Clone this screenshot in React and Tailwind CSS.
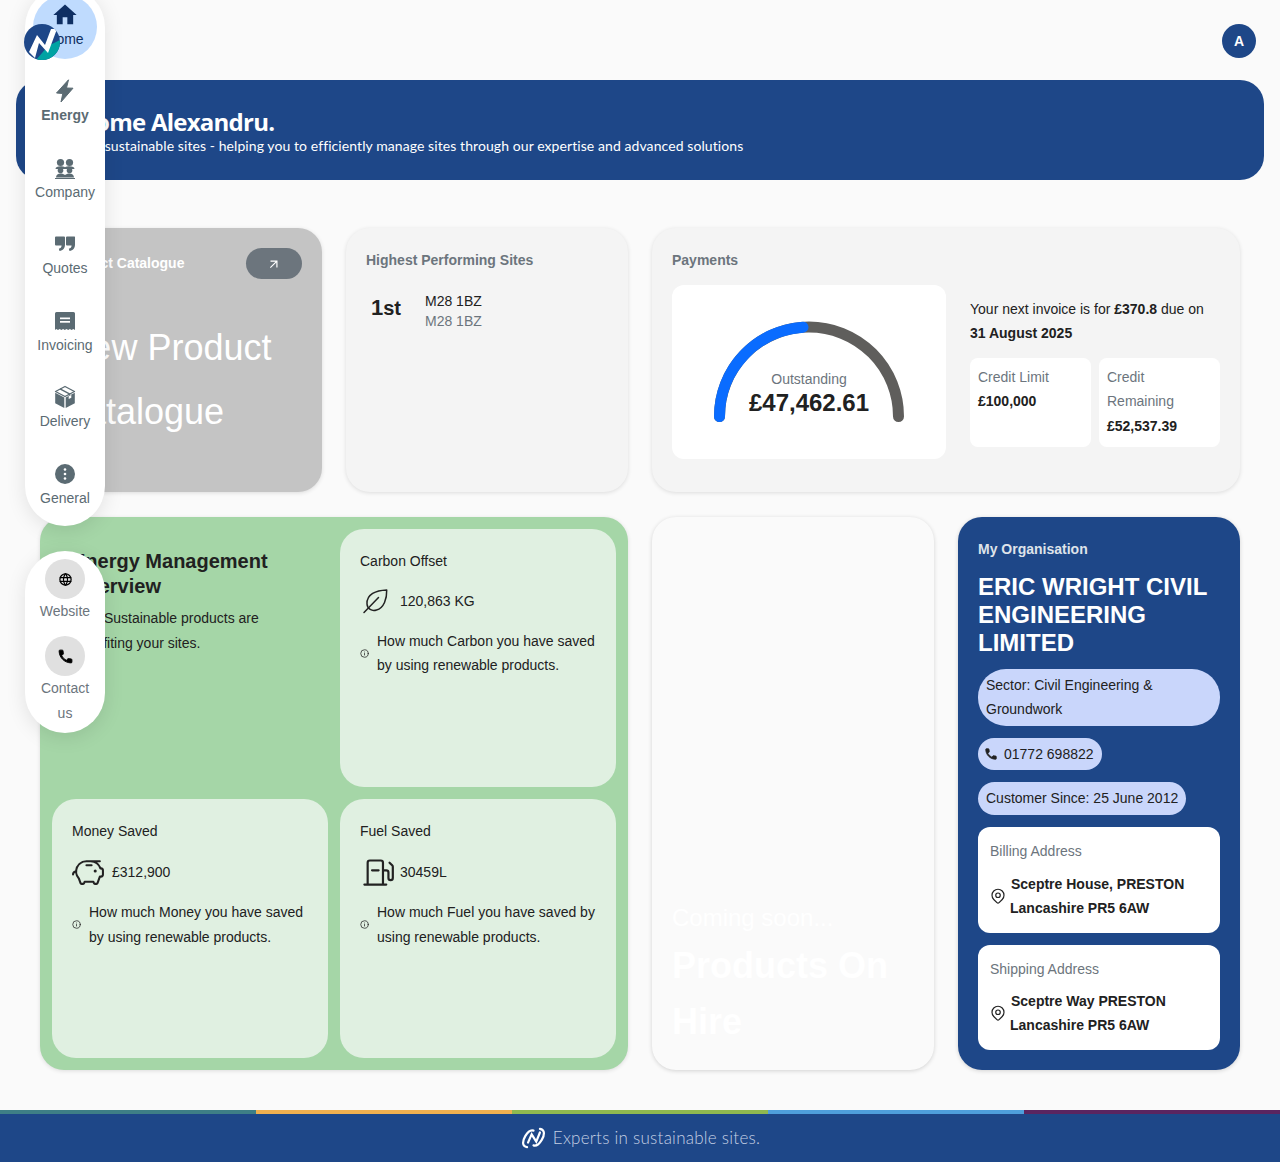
import React from "react";
import { MdHome, MdArrowOutward } from "react-icons/md";
import { TbMapPin, TbWorld } from "react-icons/tb";
import { PiPiggyBank, PiGasPump } from "react-icons/pi";
import { LuInfo } from "react-icons/lu";

const F = "font-['Liberation_Sans',Arial,sans-serif]";

function Logo() {
  return (
    <svg viewBox="0 0 36 36" className="w-9 h-9 block">
      <defs>
        <clipPath id="lc"><circle cx="18" cy="18" r="18" /></clipPath>
      </defs>
      <g clipPath="url(#lc)">
        <rect width="36" height="36" fill="#1e4788" />
        <path d="M0 36 L36 36 L36 16 L24 22 L12 36Z" fill="#00a3a3" />
        <path d="M5 28 L13 11 L21 21 L27 5 L33 5 L24 29 L15 19 L11 34Z" fill="#fff" />
      </g>
    </svg>
  );
}

function PhoneIcon({ size, color }) {
  return (
    <svg width={size} height={size} viewBox="0 0 24 24" fill={color} stroke={color} strokeWidth="1.400" strokeLinejoin="round">
      <path d="M6.620 10.790c1.440 2.830 3.760 5.140 6.590 6.590l2.200-2.200c.27-.27.67-.36 1.020-.24 1.120.37 2.330.57 3.570.57.55 0 1 .45 1 1V20c0 .55-.45 1-1 1-9.390 0-17-7.610-17-17 0-.55.45-1 1-1h3.500c.55 0 1 .45 1 1 0 1.250.2 2.450.57 3.570.11.35.03.74-.25 1.020l-2.200 2.200z" />
    </svg>
  );
}
function BoltIcon() {
  return (
    <svg viewBox="0 0 24 24" className="w-6 h-6" fill="#5b6b73" stroke="#5b6b73" strokeWidth="1" strokeLinejoin="round">
      <path d="M15.500 .8 3.500 14 9.800 14.500 8 23 20 9.200 13.500 9z" />
    </svg>
  );
}
function QuoteIcon() {
  return (
    <svg viewBox="0 0 24 24" className="w-6 h-6" fill="#5b6b73">
      <path d="M3 4.500h8a1 1 0 0 1 1 1v7c0 3.500-2 6-5.500 6.500l-.7-2.200c1.700-.5 2.700-1.500 2.800-3.300H3a1 1 0 0 1-1-1v-7a1 1 0 0 1 1-1z" />
      <path d="M14 4.500h7.500a.5.500 0 0 1 .5.500v7.500c0 3.500-2 6-5.500 6.500l-.7-2.200c1.700-.5 2.700-1.500 2.800-3.300H14a1 1 0 0 1-1-1V5.500a1 1 0 0 1 1-1z" />
    </svg>
  );
}
function CompanyIcon() {
  return (
    <svg viewBox="0 0 24 24" className="w-6 h-6" fill="#5b6b73">
      <circle cx="7.500" cy="6.500" r="3.600" />
      <circle cx="16.500" cy="6.500" r="3.600" />
      <path d="M2.500 13c0-2 2-2.800 5-2.800 1.700 0 3.400.4 4.500 1 1.100-.6 2.800-1 4.500-1 3 0 5 .8 5 2.800z" />
      <circle cx="7.500" cy="14.500" r="2.800" />
      <circle cx="16.500" cy="14.500" r="2.800" />
      <path d="M3 21.500c0-2.800 2.200-4 4.500-4 1.800 0 3.400.6 4.500 1.600 1.100-1 2.700-1.600 4.500-1.600 2.300 0 4.500 1.200 4.500 4z" />
      <rect x="2" y="22" width="20" height="1" />
    </svg>
  );
}
function InvoiceIcon() {
  return (
    <svg viewBox="0 0 24 24" className="w-6 h-6 translate-y-[1px]">
      <path d="M2 3.500a1.500 1.500 0 0 1 1.500-1.500h17a1.500 1.500 0 0 1 1.500 1.500V20l-1.700-1-1.700 1-1.700-1-1.700 1-1.700-1-1.700 1-1.700-1-1.700 1-1.700-1-1.700 1-1.700-1L2 20z" fill="#5b6b73" />
      <rect x="7" y="7.500" width="10" height="1.700" fill="#fff" />
      <rect x="7" y="11" width="10" height="1.700" fill="#fff" />
    </svg>
  );
}
function BoxIcon() {
  return (
    <svg viewBox="0 0 24 24" className="w-6 h-6" fill="#5b6b73">
      <path d="M12 1.500 21.500 6.500 12 11.500 2.500 6.500z" fill="none" stroke="#5b6b73" strokeWidth="1.300" strokeLinejoin="round" />
      <path d="M7 3.800 16.500 8.900 16.500 12" fill="none" stroke="#5b6b73" strokeWidth="1.500" />
      <path d="M2.200 7.800 11.300 12.600V23L2.200 18.200z" />
      <path d="M21.800 7.800 12.700 12.600V23L21.800 18.200z" />
      <path d="M15.700 11v3l1.600-.8 1-.5V9.900z" fill="#fff" />
    </svg>
  );
}
function DotsIcon() {
  return (
    <svg viewBox="0 0 24 24" className="w-6 h-6">
      <circle cx="12" cy="12" r="10" fill="#5b6b73" />
      <circle cx="12" cy="7.500" r="1.300" fill="#fff" />
      <circle cx="12" cy="12" r="1.300" fill="#fff" />
      <circle cx="12" cy="16.500" r="1.300" fill="#fff" />
    </svg>
  );
}
function LeafIcon() {
  return (
    <svg viewBox="0 0 27 27" className="w-[27px] h-[27px]" fill="none" stroke="#222" strokeWidth="1.500" strokeLinecap="round" strokeLinejoin="round">
      <path d="M24.700 2C14 2.500 4.500 6 5 16c.3 5 5 7.500 9.500 6C22 20 25 10.500 24.700 2z" />
      <path d="M2 24.500 16.500 9.500" />
    </svg>
  );
}

function NavItem({ icon, label, bold, active }) {
  return (
    <div className={"h-16 w-16 rounded-full flex flex-col items-center py-2 text-sm leading-6 " + (active ? "bg-[#bfdbfe] text-[#0f2f63]" : "text-[#5b6b73]") + (bold ? " font-bold" : "")}>
      <div className="h-6 flex items-center justify-center">{icon}</div>
      <div>{label}</div>
    </div>
  );
}

function Info() {
  return <LuInfo size={9} className="shrink-0 text-[#222]" />;
}

function Cell({ title, icon, value, gap, desc, rowMt, descMt, descLh }) {
  return (
    <div className="bg-[#e0f0e1] rounded-[24px] p-5 text-sm text-[#212121]">
      <div className="leading-6 h-6">{title}</div>
      <div className={"flex items-center h-8 " + rowMt + " " + gap}>
        {icon}
        <span>{value}</span>
      </div>
      <div className={"flex items-center gap-2 " + descMt + " " + descLh}>
        <Info />
        <div>{desc}</div>
      </div>
    </div>
  );
}

function AddressCard({ title, line1, line2, mt, h }) {
  return (
    <div className={"bg-white rounded-xl px-3 pt-[12px] " + h}>
      <div className="text-sm leading-6 text-[#6c757d]">{title}</div>
      <div className={"flex items-center text-sm font-bold text-[#212121] leading-6 " + mt}>
        <TbMapPin size={18} className="shrink-0 text-[#222] mr-[2px] -ml-[1px]" strokeWidth={1.600} />
        <div className="pl-[1px]">
          <div className="pl-[1px]">{line1}</div>
          <div>{line2}</div>
        </div>
      </div>
    </div>
  );
}

function Gauge() {
  return (
    <svg width="200" height="112" viewBox="0 0 200 112" className="block">
      <path d="M10.500 100.500 A89.500 89.500 0 0 1 189.500 100.500" fill="none" stroke="#5f5e5c" strokeWidth="11" strokeLinecap="round" />
      <path d="M10.500 100.500 A89.500 89.500 0 0 1 94 11.200" fill="none" stroke="#0a6cff" strokeWidth="11" strokeLinecap="round" />
    </svg>
  );
}

export default function App() {
  return (
    <div className={"relative w-full h-[1162px] overflow-hidden bg-[#fafafa] flex flex-col " + F}>
      <header className="h-20 shrink-0 flex items-start justify-end pt-6 pr-6">
        <div className="w-[34px] h-[34px] rounded-full bg-[#1e4788] text-white text-sm font-bold flex items-center justify-center">A</div>
      </header>

      <div className="mx-4 h-[100px] shrink-0 rounded-[24px] bg-[#1e4788] text-white pl-[20px] pt-[25px]">
        <div className="font-['Open_Sans',sans-serif] text-2xl font-bold leading-[34px] tracking-[-0.75px] pl-[5px]">Welcome Alexandru.</div>
        <div className="font-['Lato',sans-serif] text-sm leading-[18px] tracking-[0.08px] pl-[3px] -mt-[2px]">Experts in sustainable sites - helping you to efficiently manage sites through our expertise and advanced solutions</div>
      </div>

      <main className="mx-10 mt-12 grid grid-cols-4 gap-x-6 gap-y-[25px] grid-rows-[264px_553px]">
        <div className="rounded-[24px] bg-[#c4c4c4] shadow-[0_1px_4px_rgba(0,0,0,0.12)] px-5 pt-5 text-white">
          <div className="flex items-start justify-between">
            <div className="text-sm font-bold leading-[30px]">Product Catalogue</div>
            <div className="w-14 h-[31px] rounded-full bg-[#6c757d] flex items-center justify-center">
              <MdArrowOutward size={14} />
            </div>
          </div>
          <div className="text-4xl leading-[63.500px] mt-[37px]">View Product Catalogue</div>
        </div>

        <div className="rounded-[24px] bg-[#f4f4f4] shadow-[0_1px_4px_rgba(0,0,0,0.12)] px-5 pt-5">
          <div className="text-sm font-bold text-[#6c757d] leading-6">Highest Performing Sites</div>
          <div className="flex items-start mt-[19px] pl-[5px]">
            <div className="text-[22px] font-bold text-[#212121] leading-[30px] w-[54px] mt-[2px]">1<span className="text-[20px]">st</span></div>
            <div className="text-sm leading-5 text-[#212121]">
              <div>M28 1BZ</div>
              <div className="text-[#6c757d]">M28 1BZ</div>
            </div>
          </div>
        </div>

        <div className="col-span-2 rounded-[24px] bg-[#f4f4f4] shadow-[0_1px_4px_rgba(0,0,0,0.12)] px-5 pt-5">
          <div className="text-sm font-bold text-[#6c757d] leading-6">Payments</div>
          <div className="flex mt-[13px]">
            <div className="relative w-[274px] h-[174px] bg-white rounded-xl shrink-0 flex items-start justify-center pt-[31px]">
              <Gauge />
              <div className="absolute left-0 right-0 top-[84px] text-center">
                <div className="text-sm leading-5 text-[#6c757d]">Outstanding</div>
                <div className="text-2xl font-bold leading-[28px] text-[#212121]">£47,462.61</div>
              </div>
            </div>
            <div className="ml-6 w-[250px] pt-[12px]">
              <div className="text-sm leading-6 text-[#212121]">Your next invoice is for <b>£370.8</b> due on <b>31 August 2025</b></div>
              <div className="grid grid-cols-2 gap-2 mt-[13px] text-sm leading-6">
                <div className="bg-white rounded-lg px-2 pt-[7px] h-[89px]">
                  <div className="text-[#6c757d]">Credit Limit</div>
                  <div className="font-bold text-[#212121]">£100,000</div>
                </div>
                <div className="bg-white rounded-lg px-2 pt-[7px] h-[89px]">
                  <div className="text-[#6c757d]">Credit Remaining</div>
                  <div className="font-bold text-[#212121] mt-[1px]">£52,537.39</div>
                </div>
              </div>
            </div>
          </div>
        </div>

        <div className="col-span-2 rounded-[24px] bg-[#a5d6a7] shadow-[0_1px_4px_rgba(0,0,0,0.12)] p-3 grid grid-cols-2 gap-3 grid-rows-[258px_259px]">
          <div className="px-5 pt-[20px] text-[#212121]">
            <div className="text-xl font-bold leading-[25px]">Energy Management Overview</div>
            <div className="text-sm leading-[25px] mt-[7px] pr-10">How Sustainable products are benefiting your sites.</div>
          </div>
          <Cell title="Carbon Offset" gap="gap-[11px] pl-[2px]" value="120,863 KG" rowMt="mt-[12px]" descMt="mt-[12px]" descLh="leading-6"
            icon={<LeafIcon />}
            desc="How much Carbon you have saved by using renewable products." />
          <Cell title="Money Saved" gap="gap-[7px]" value="£312,900" rowMt="mt-[13px]" descMt="mt-[11.500px]" descLh="leading-[25px]"
            icon={<PiPiggyBank size={33} className="text-[#222]" />}
            desc="How much Money you have saved by using renewable products." />
          <Cell title="Fuel Saved" gap="gap-[5px]" value="30459L" rowMt="mt-[13px]" descMt="mt-[11.500px]" descLh="leading-[25px]"
            icon={<PiGasPump size={35} className="text-[#222]" />}
            desc="How much Fuel you have saved by using renewable products." />
        </div>

        <div className="rounded-[24px] bg-[#fafafa] shadow-[0_1px_4px_rgba(0,0,0,0.16)] px-5 flex flex-col justify-end pb-[20px] text-white">
          <div className="text-2xl leading-[32px]">Coming soon...</div>
          <div className="text-4xl font-bold leading-[56px] mt-[4px]">Products On Hire</div>
        </div>

        <div className="rounded-[24px] bg-[#1e4788] shadow-[0_1px_4px_rgba(0,0,0,0.16)] p-5 flex flex-col items-start">
          <div className="text-sm font-bold text-[#dfe3ea] leading-6">My Organisation</div>
          <div className="text-2xl font-bold text-white leading-[28px] mt-[12px]">ERIC WRIGHT CIVIL ENGINEERING LIMITED</div>
          <div className="mt-[12px] w-full rounded-[28px] bg-[#c9d6fb] px-2 py-1 text-sm leading-6 text-[#212121] h-[57px]">Sector: Civil Engineering &amp; Groundwork</div>
          <div className="mt-[12px] rounded-full bg-[#c9d6fb] pl-[6px] pr-2 py-1 text-sm leading-6 text-[#212121] flex items-center gap-[6px] h-[32px]">
            <PhoneIcon size={14} color="#222" />01772 698822
          </div>
          <div className="mt-[12px] rounded-full bg-[#c9d6fb] px-2 py-1 text-sm leading-6 text-[#212121] h-[33px]">Customer Since: 25 June 2012</div>
          <div className="mt-[12px] w-full flex flex-col gap-3">
            <AddressCard title="Billing Address" line1="Sceptre House, PRESTON" line2="Lancashire PR5 6AW" mt="mt-[9px]" h="h-[106px]" />
            <AddressCard title="Shipping Address" line1="Sceptre Way PRESTON" line2="Lancashire PR5 6AW" mt="mt-[8px]" h="h-[105px]" />
          </div>
        </div>
      </main>

      <footer className="mt-auto shrink-0">
        <div className="grid grid-cols-5 h-1">
          <div className="bg-[#3e7f86]" />
          <div className="bg-[#f0b04f]" />
          <div className="bg-[#8fb84f]" />
          <div className="bg-[#4f9fdc]" />
          <div className="bg-[#5a2560]" />
        </div>
        <div className="h-12 bg-[#1e4788] flex items-center justify-center gap-[6px]">
          <svg viewBox="0 0 28 24" className="w-[27px] h-[22px]" fill="none" stroke="#fff" strokeWidth="2.400" strokeLinecap="round">
            <path d="M7 22 C1 21 2 15 5 10 C8 5 11 3 14 4" />
            <path d="M8 17 L12 8 L17 16 L21 6" />
            <path d="M21 2 C27 3 26 9 23 14 C20 19 17 21 14 20" />
          </svg>
          <span className="font-['Lato',sans-serif] font-light text-[17px] tracking-[0.25px] text-[#c5d0e4]">Experts in sustainable sites.</span>
        </div>
      </footer>

      <nav className="absolute left-[25px] top-[-13px] w-20 pt-2 pb-2 rounded-[40px] bg-white shadow-[0_4px_20px_rgba(0,0,0,0.1)] flex flex-col items-center gap-[12.450px]">
        <NavItem active label="Home" icon={<MdHome size={28} className="text-[#0f2f63]" />} />
        <NavItem bold label="Energy" icon={<BoltIcon />} />
        <NavItem label="Company" icon={<CompanyIcon />} />
        <NavItem label="Quotes" icon={<QuoteIcon />} />
        <NavItem label="Invoicing" icon={<InvoiceIcon />} />
        <NavItem label="Delivery" icon={<BoxIcon />} />
        <NavItem label="General" icon={<DotsIcon />} />
      </nav>

      <div className="absolute left-6 top-6">
        <Logo />
      </div>

      <nav className="absolute left-[25px] top-[551px] w-20 h-[182px] rounded-[40px] bg-white shadow-[0_4px_20px_rgba(0,0,0,0.1)] flex flex-col items-center pt-2 text-sm leading-[25px] text-[#6c757d] text-center">
        <div className="w-10 h-10 rounded-full bg-[#e0e0e0] flex items-center justify-center">
          <TbWorld size={15} className="text-black" />
        </div>
        <div>Website</div>
        <div className="w-10 h-10 rounded-full bg-[#e0e0e0] flex items-center justify-center mt-3">
          <PhoneIcon size={17} color="#000" />
        </div>
        <div className="w-14">Contact us</div>
      </nav>
    </div>
  );
}
